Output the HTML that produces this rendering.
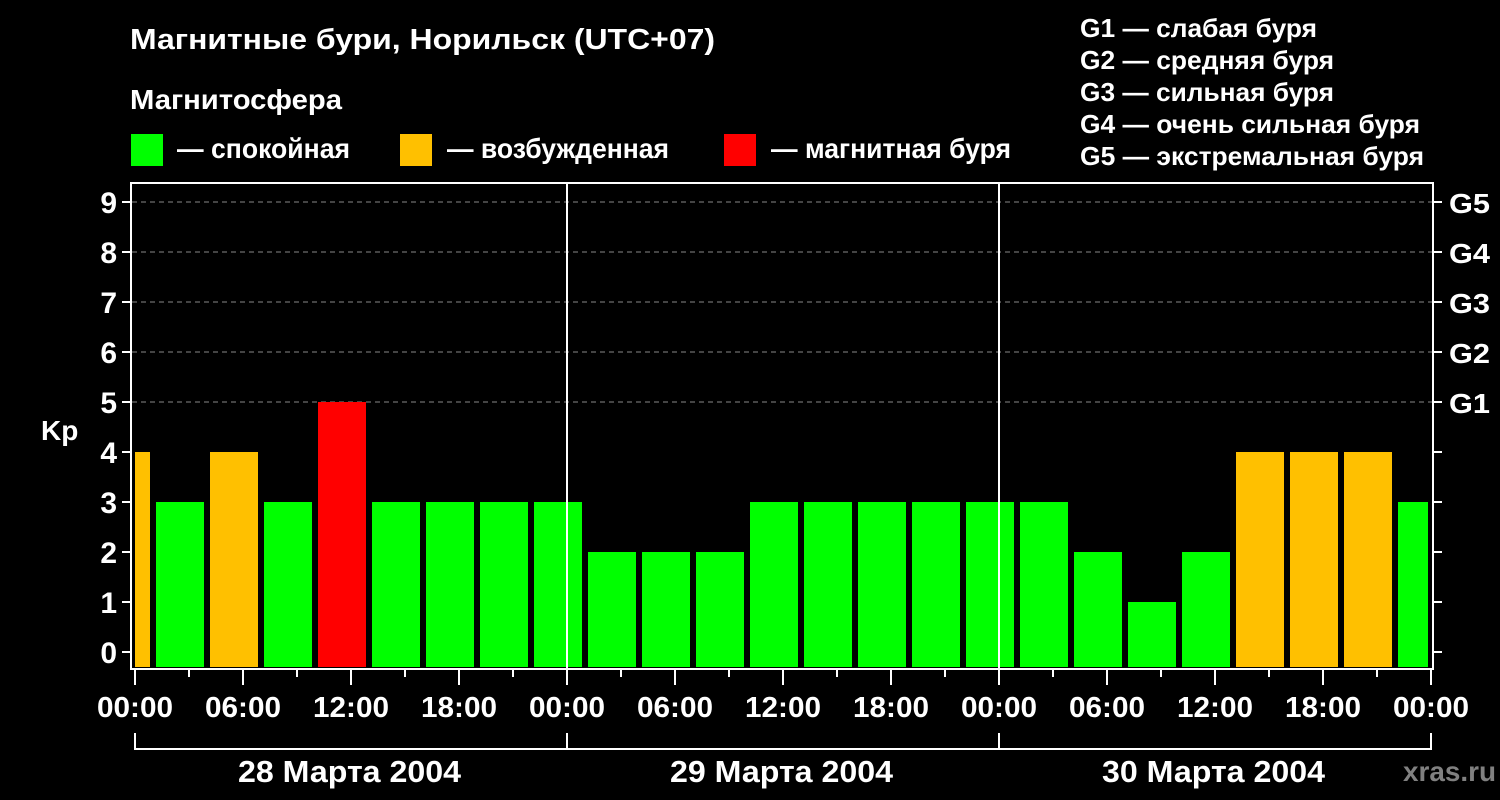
<!DOCTYPE html>
<html><head><meta charset="utf-8"><style>html,body{margin:0;padding:0;background:#000;}svg{display:block}</style></head>
<body>
<svg width="1500" height="800" xmlns="http://www.w3.org/2000/svg" font-family="Liberation Sans, sans-serif" font-weight="bold" fill="#fff">
<rect width="1500" height="800" fill="#000"/>
<text x="130" y="49" font-size="29" textLength="585" lengthAdjust="spacingAndGlyphs">Магнитные бури, Норильск (UTC+07)</text>
<text x="130" y="109" font-size="28" textLength="212" lengthAdjust="spacingAndGlyphs">Магнитосфера</text>
<rect x="131" y="134" width="32" height="32" fill="#00ff00"/>
<text x="177" y="158" font-size="28" textLength="173" lengthAdjust="spacingAndGlyphs">— спокойная</text>
<rect x="400" y="134" width="32" height="32" fill="#ffc000"/>
<text x="447" y="158" font-size="28" textLength="222" lengthAdjust="spacingAndGlyphs">— возбужденная</text>
<rect x="724" y="134" width="32" height="32" fill="#ff0000"/>
<text x="771" y="158" font-size="28" textLength="240" lengthAdjust="spacingAndGlyphs">— магнитная буря</text>
<g font-size="26">
<text x="1080" y="37" textLength="237" lengthAdjust="spacingAndGlyphs">G1 — слабая буря</text>
<text x="1080" y="69" textLength="254" lengthAdjust="spacingAndGlyphs">G2 — средняя буря</text>
<text x="1080" y="101" textLength="254" lengthAdjust="spacingAndGlyphs">G3 — сильная буря</text>
<text x="1080" y="133" textLength="340" lengthAdjust="spacingAndGlyphs">G4 — очень сильная буря</text>
<text x="1080" y="165" textLength="344" lengthAdjust="spacingAndGlyphs">G5 — экстремальная буря</text>
</g>
<g stroke="#888" stroke-width="1" stroke-dasharray="5,4">
<line x1="132" y1="202" x2="1432" y2="202"/><line x1="132" y1="252" x2="1432" y2="252"/><line x1="132" y1="302" x2="1432" y2="302"/><line x1="132" y1="352" x2="1432" y2="352"/><line x1="132" y1="402" x2="1432" y2="402"/>
</g>
<g>
<rect x="135" y="452" width="15" height="215" fill="#ffc000"/>
<rect x="156" y="502" width="48" height="165" fill="#00ff00"/>
<rect x="210" y="452" width="48" height="215" fill="#ffc000"/>
<rect x="264" y="502" width="48" height="165" fill="#00ff00"/>
<rect x="318" y="402" width="48" height="265" fill="#ff0000"/>
<rect x="372" y="502" width="48" height="165" fill="#00ff00"/>
<rect x="426" y="502" width="48" height="165" fill="#00ff00"/>
<rect x="480" y="502" width="48" height="165" fill="#00ff00"/>
<rect x="534" y="502" width="48" height="165" fill="#00ff00"/>
<rect x="588" y="552" width="48" height="115" fill="#00ff00"/>
<rect x="642" y="552" width="48" height="115" fill="#00ff00"/>
<rect x="696" y="552" width="48" height="115" fill="#00ff00"/>
<rect x="750" y="502" width="48" height="165" fill="#00ff00"/>
<rect x="804" y="502" width="48" height="165" fill="#00ff00"/>
<rect x="858" y="502" width="48" height="165" fill="#00ff00"/>
<rect x="912" y="502" width="48" height="165" fill="#00ff00"/>
<rect x="966" y="502" width="48" height="165" fill="#00ff00"/>
<rect x="1020" y="502" width="48" height="165" fill="#00ff00"/>
<rect x="1074" y="552" width="48" height="115" fill="#00ff00"/>
<rect x="1128" y="602" width="48" height="65" fill="#00ff00"/>
<rect x="1182" y="552" width="48" height="115" fill="#00ff00"/>
<rect x="1236" y="452" width="48" height="215" fill="#ffc000"/>
<rect x="1290" y="452" width="48" height="215" fill="#ffc000"/>
<rect x="1344" y="452" width="48" height="215" fill="#ffc000"/>
<rect x="1398" y="502" width="30" height="165" fill="#00ff00"/>
</g>
<g stroke="#fff" stroke-width="2" fill="none">
<rect x="131" y="183" width="1302" height="486"/>
<line x1="567" y1="183" x2="567" y2="669"/><line x1="999" y1="183" x2="999" y2="669"/>
<path d="M122 202h9M122 252h9M122 302h9M122 352h9M122 402h9M122 452h9M122 502h9M122 552h9M122 602h9M122 652h9"/>
<path d="M1433 202h9M1433 252h9M1433 302h9M1433 352h9M1433 402h9M1433 452h9M1433 502h9M1433 552h9M1433 602h9M1433 652h9"/>
<path d="M135 669v16M243 669v16M351 669v16M459 669v16M567 669v16M675 669v16M783 669v16M891 669v16M999 669v16M1107 669v16M1215 669v16M1323 669v16M1431 669v16"/>
<path d="M189 669v8M297 669v8M405 669v8M513 669v8M621 669v8M729 669v8M837 669v8M945 669v8M1053 669v8M1161 669v8M1269 669v8M1377 669v8"/>
<path d="M135 733v16H1431v-16M567 733v16M999 733v16"/>
</g>
<g font-size="30" text-anchor="end">
<text x="117" y="213">9</text><text x="117" y="263">8</text><text x="117" y="313">7</text><text x="117" y="363">6</text><text x="117" y="413">5</text><text x="117" y="463">4</text><text x="117" y="513">3</text><text x="117" y="563">2</text><text x="117" y="613">1</text><text x="117" y="663">0</text>
</g>
<text x="41" y="440" font-size="28">Kp</text>
<g font-size="28">
<text x="1449" y="213" textLength="41" lengthAdjust="spacingAndGlyphs">G5</text><text x="1449" y="263" textLength="41" lengthAdjust="spacingAndGlyphs">G4</text><text x="1449" y="313" textLength="41" lengthAdjust="spacingAndGlyphs">G3</text><text x="1449" y="363" textLength="41" lengthAdjust="spacingAndGlyphs">G2</text><text x="1449" y="413" textLength="41" lengthAdjust="spacingAndGlyphs">G1</text>
</g>
<g font-size="29">
<text x="97" y="717" textLength="76" lengthAdjust="spacingAndGlyphs">00:00</text><text x="205" y="717" textLength="76" lengthAdjust="spacingAndGlyphs">06:00</text><text x="313" y="717" textLength="76" lengthAdjust="spacingAndGlyphs">12:00</text><text x="421" y="717" textLength="76" lengthAdjust="spacingAndGlyphs">18:00</text>
<text x="529" y="717" textLength="76" lengthAdjust="spacingAndGlyphs">00:00</text><text x="637" y="717" textLength="76" lengthAdjust="spacingAndGlyphs">06:00</text><text x="745" y="717" textLength="76" lengthAdjust="spacingAndGlyphs">12:00</text><text x="853" y="717" textLength="76" lengthAdjust="spacingAndGlyphs">18:00</text>
<text x="961" y="717" textLength="76" lengthAdjust="spacingAndGlyphs">00:00</text><text x="1069" y="717" textLength="76" lengthAdjust="spacingAndGlyphs">06:00</text><text x="1177" y="717" textLength="76" lengthAdjust="spacingAndGlyphs">12:00</text><text x="1285" y="717" textLength="76" lengthAdjust="spacingAndGlyphs">18:00</text><text x="1393" y="717" textLength="76" lengthAdjust="spacingAndGlyphs">00:00</text>
</g>
<g font-size="31">
<text x="238" y="782" textLength="223" lengthAdjust="spacingAndGlyphs">28 Марта 2004</text><text x="670" y="782" textLength="223" lengthAdjust="spacingAndGlyphs">29 Марта 2004</text><text x="1102" y="782" textLength="223" lengthAdjust="spacingAndGlyphs">30 Марта 2004</text>
</g>
<text x="1403" y="781" font-size="28" textLength="93" lengthAdjust="spacingAndGlyphs" fill="#808080">xras.ru</text>
</svg>
</body></html>
